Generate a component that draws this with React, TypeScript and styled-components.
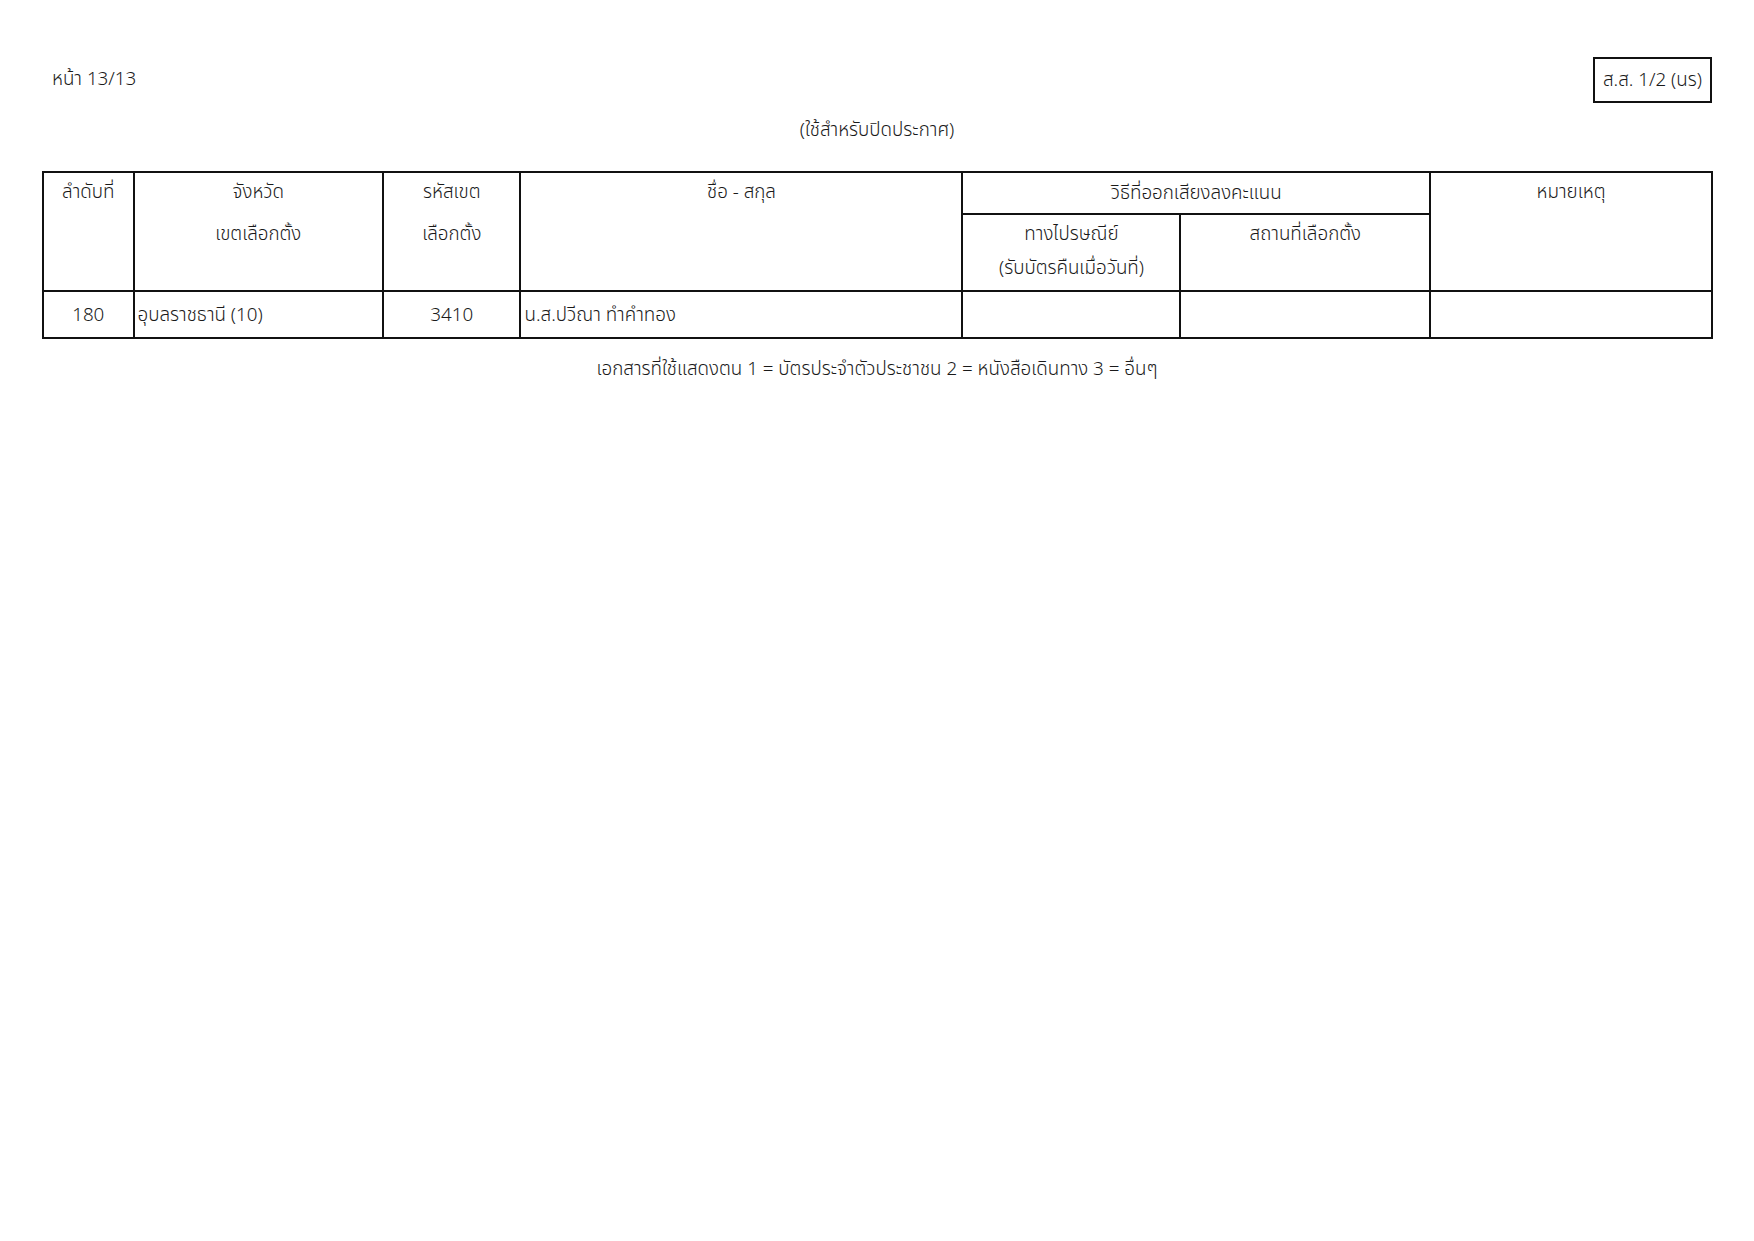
import React from "react";
import styled, { createGlobalStyle } from "styled-components";

const GlobalStyle = createGlobalStyle`
  html, body {
    margin: 0;
    padding: 0;
    background: #ffffff;
  }
  body {
    font-family: "Noto Sans Thai", "Tahoma", "Noto Sans", "DejaVu Sans", sans-serif;
    font-weight: 300;
    color: #1a1a1a;
  }
`;

// column widths taken from the printed form
const columns = [90.5, 249.6, 137.4, 442, 218, 249.6, 282];

const Page = styled.div`
  width: 1754px;
  min-height: 1241px;
  box-sizing: border-box;
  padding: 57px 42px 0 42px;
  font-size: 18.8px;
`;

const TopBar = styled.div`
  display: flex;
  justify-content: space-between;
  align-items: center;
  height: 46px;
`;

const PageNo = styled.span`
  padding-left: 10px;
  margin-top: -2px;
`;

const FormCode = styled.div`
  box-sizing: border-box;
  width: 119px;
  height: 46px;
  border: 2px solid #111;
  display: flex;
  align-items: center;
  justify-content: center;
`;

const Title = styled.div`
  text-align: center;
  line-height: 24px;
  margin-top: 15px;
`;

const Table = styled.table`
  margin-top: 29px;
  width: 1669px;
  border-collapse: collapse;
  table-layout: fixed;

  td,
  th {
    border: 2px solid #111;
    padding: 0;
    font-weight: 300;
  }
`;

const HeadCell = styled.th<{ $middle?: boolean }>`
  text-align: center;
  vertical-align: ${(p) => (p.$middle ? "middle" : "top")};
  line-height: 24px;
`;

// stacked header labels; the spacing follows the form's ruled lines
const HeadLines = styled.div<{ $gap: number; $shift: number }>`
  line-height: ${(p) => p.$gap}px;
  margin-top: ${(p) => p.$shift}px;
`;

const TopRow = styled.tr`
  height: 42px;
`;

const SubRow = styled.tr`
  height: 77px;
`;

const DataRow = styled.tr`
  height: 47px;
`;

const Cell = styled.td<{ $align?: "left" | "center" }>`
  text-align: ${(p) => p.$align ?? "center"};
  vertical-align: middle;
  line-height: 24px;
  padding: ${(p) => (p.$align === "left" ? "0 3px" : "0")} !important;
`;

const Footnote = styled.div`
  text-align: center;
  line-height: 24px;
  margin-top: 18px;
`;

export default function App() {
  return (
    <>
      <GlobalStyle />
      <Page>
        <TopBar>
          <PageNo>หน้า 13/13</PageNo>
          <FormCode>ส.ส. 1/2 (นร)</FormCode>
        </TopBar>
        <Title>(ใช้สำหรับปิดประกาศ)</Title>
        <Table>
          <colgroup>
            {columns.map((w, i) => (
              <col key={i} style={{ width: `${w}px` }} />
            ))}
          </colgroup>
          <thead>
            <TopRow>
              <HeadCell rowSpan={2}>
                <HeadLines $gap={42} $shift={-2}>ลำดับที่</HeadLines>
              </HeadCell>
              <HeadCell rowSpan={2}>
                <HeadLines $gap={42} $shift={-2}>
                  จังหวัด
                  <br />
                  เขตเลือกตั้ง
                </HeadLines>
              </HeadCell>
              <HeadCell rowSpan={2}>
                <HeadLines $gap={42} $shift={-2}>
                  รหัสเขต
                  <br />
                  เลือกตั้ง
                </HeadLines>
              </HeadCell>
              <HeadCell rowSpan={2}>
                <HeadLines $gap={42} $shift={-2}>ชื่อ - สกุล</HeadLines>
              </HeadCell>
              <HeadCell colSpan={2} $middle>
                วิธีที่ออกเสียงลงคะแนน
              </HeadCell>
              <HeadCell rowSpan={2}>
                <HeadLines $gap={42} $shift={-2}>หมายเหตุ</HeadLines>
              </HeadCell>
            </TopRow>
            <SubRow>
              <HeadCell>
                <HeadLines $gap={34} $shift={2}>
                  ทางไปรษณีย์
                  <br />
                  (รับบัตรคืนเมื่อวันที่)
                </HeadLines>
              </HeadCell>
              <HeadCell>
                <HeadLines $gap={34} $shift={2}>สถานที่เลือกตั้ง</HeadLines>
              </HeadCell>
            </SubRow>
          </thead>
          <tbody>
            <DataRow>
              <Cell>180</Cell>
              <Cell $align="left">อุบลราชธานี (10)</Cell>
              <Cell>3410</Cell>
              <Cell $align="left">น.ส.ปวีณา ทำคำทอง</Cell>
              <Cell />
              <Cell />
              <Cell />
            </DataRow>
          </tbody>
        </Table>
        <Footnote>
          เอกสารที่ใช้แสดงตน 1 = บัตรประจำตัวประชาชน 2 = หนังสือเดินทาง 3 = อื่นๆ
        </Footnote>
      </Page>
    </>
  );
}
